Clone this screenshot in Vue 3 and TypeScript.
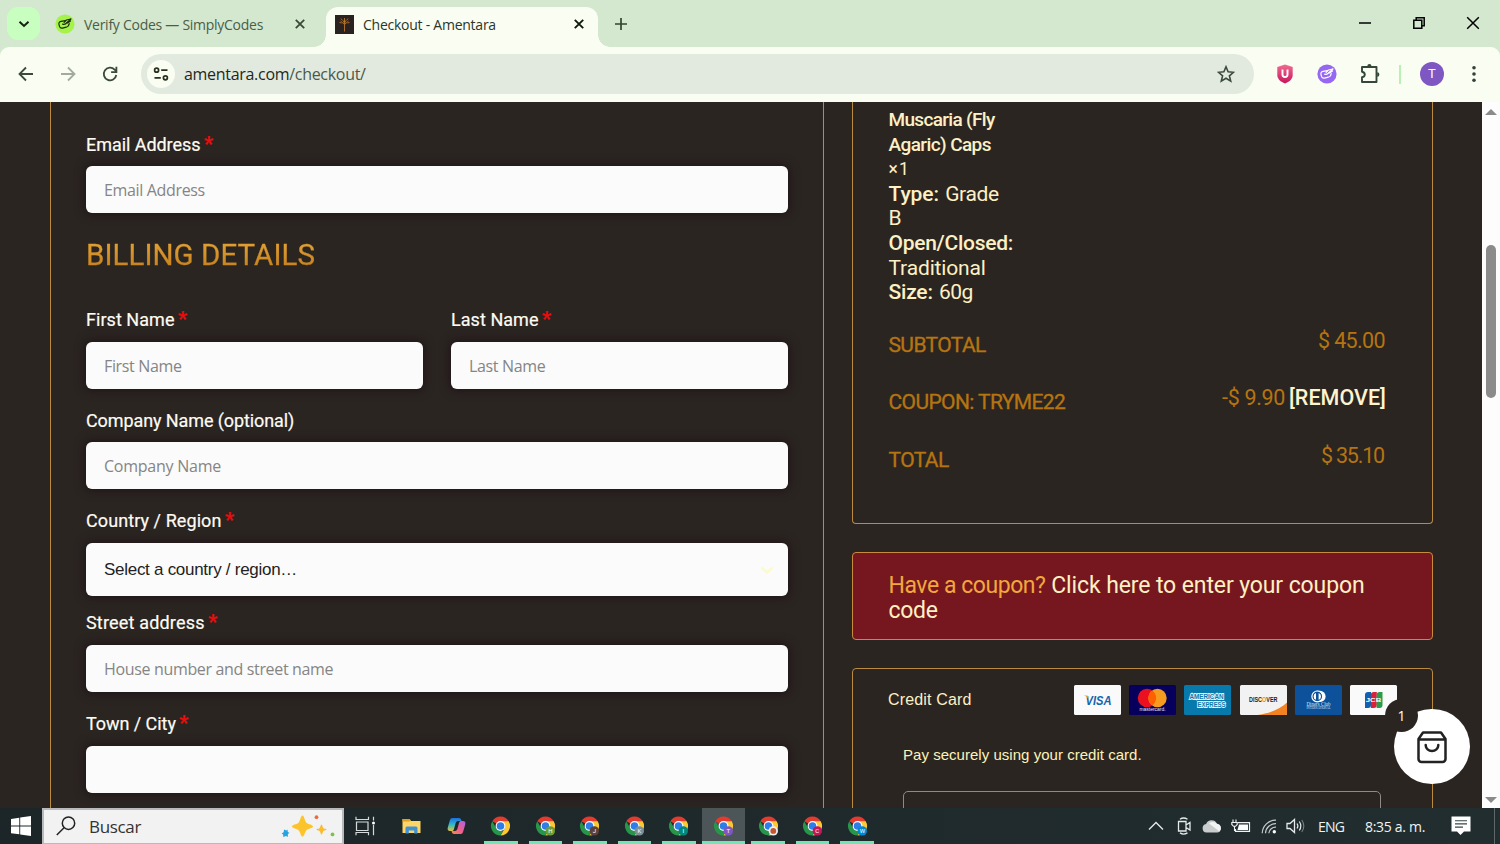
<script setup lang="ts">
interface TaskApp { id: string; badge?: string; color?: string; active?: boolean; logo?: boolean }

const apps: TaskApp[] = [
  { id: 'main' },
  { id: 'h', badge: 'H', color: '#689f38' },
  { id: 'j', badge: 'J', color: '#5d4037' },
  { id: 'k', badge: 'K', color: '#78909c' },
  { id: 'i', badge: 'I', color: '#00897b' },
  { id: 't', badge: 'T', color: '#7e57c2', active: true },
  { id: 'logo', logo: true, color: '#eceff1' },
  { id: 'c', badge: 'C', color: '#c2185b' },
  { id: 'w', badge: 'W', color: '#0288d1' },
]

const totals = [
  { key: 'subtotal', label: 'SUBTOTAL', value: '$ 45.00' },
  { key: 'coupon', label: 'COUPON: TRYME22', value: '-$ 9.90', removable: true },
  { key: 'total', label: 'TOTAL', value: '$ 35.10' },
]
</script>

<template>
  <div class="screen">
    <header class="tabs">
      <button class="tab-search" aria-label="Search tabs">
        <svg width="12" height="12" viewBox="0 0 12 12"><path d="M1.500 3.800L6 8l4.500-4.200" fill="none" stroke="#14210f" stroke-width="2" /></svg>
      </button>
      <div class="tab">
        <svg class="fav" width="20" height="20" viewBox="0 0 20 20">
          <circle cx="10" cy="10" r="9.600" fill="#a5f24b" />
          <g fill="none" stroke="#1a2b10" stroke-width="1.200" stroke-linecap="round" stroke-linejoin="round">
            <path d="M10.500 6.600L6 7.400c-1.800.4-2.400 1.600-2 3.200l.5 1.800c.5 1.500 1.500 2 3 1.700l3.700-.9c2-.6 2.800-1.800 3-3.700" />
            <path d="M7.600 10.200c1.900.5 3.400-.2 4.400-1.800l4-3.400-4.600 1-2.300 2.300M12.500 9l3-2" />
          </g>
        </svg>
        <span class="tab-title verify">Verify Codes — SimplyCodes</span>
        <svg class="close" width="12" height="12" viewBox="0 0 12 12"><path d="M1.800 1.800l8.400 8.400M10.200 1.800l-8.400 8.400" stroke="#3a4a36" stroke-width="1.800" /></svg>
      </div>
      <div class="tab active">
        <svg class="fav" width="19" height="19" viewBox="0 0 19 19">
          <rect width="19" height="19" fill="#2a2220" />
          <path d="M9.500 16.500V7M9.500 9.500L5.500 6M9.500 9.500l4-3.500M9.500 7V3M7.500 5.500L6 3.500M11.500 5.500L13 3.500M4.500 7.500l2 .5M14.500 7.500l-2 .5" stroke="#a96f2b" stroke-width="1" fill="none" />
          <circle cx="9.500" cy="6.500" r="1.300" fill="#b9792c" />
        </svg>
        <span class="tab-title check">Checkout - Amentara</span>
        <svg class="close" width="12" height="12" viewBox="0 0 12 12"><path d="M1.800 1.800l8.400 8.400M10.200 1.800l-8.400 8.400" stroke="#10180e" stroke-width="1.900" /></svg>
      </div>
      <svg class="plus" width="14" height="14" viewBox="0 0 14 14"><path d="M7 1v12M1 7h12" stroke="#33432f" stroke-width="1.700" /></svg>
      <div class="window-buttons">
        <svg width="14" height="14" viewBox="0 0 14 14"><path d="M1 7h12" stroke="#000" stroke-width="1.500" /></svg>
        <svg width="14" height="14" viewBox="0 0 14 14"><path d="M1.800 4.200h8v8h-8zM4.200 4V1.800h8v8H10" fill="none" stroke="#000" stroke-width="1.500" /></svg>
        <svg width="14" height="14" viewBox="0 0 14 14"><path d="M1.200 1.200l11.600 11.600M12.800 1.200L1.200 12.800" stroke="#000" stroke-width="1.500" /></svg>
      </div>
    </header>

    <div class="toolbar-wrap">
      <nav class="toolbar">
        <svg class="nav" width="16" height="16" viewBox="0 0 16 16"><path d="M15 8H2M8 1.500L1.500 8 8 14.500" fill="none" stroke="#3c4a3c" stroke-width="1.800" /></svg>
        <svg class="nav" width="16" height="16" viewBox="0 0 16 16"><path d="M1 8h13M8 1.500L14.500 8 8 14.500" fill="none" stroke="#a3aba0" stroke-width="1.800" /></svg>
        <svg class="nav" width="16" height="16" viewBox="0 0 16 16"><path d="M14.300 9A6.300 6.300 0 1 1 12.600 3.600L14.200 5.200M14.400 .8v5.300H9.100" fill="none" stroke="#3c4a3c" stroke-width="1.800" /></svg>
        <div class="omnibox">
          <span class="site-info">
            <svg width="16" height="16" viewBox="0 0 16 16"><g fill="none" stroke="#27331f" stroke-width="1.700"><circle cx="3.600" cy="4.200" r="2" /><path d="M8.200 4.200h6.300M1.500 11.800h6.300" /><circle cx="12.400" cy="11.800" r="2" /></g></svg>
          </span>
          <span class="url"><b>amentara.com</b>/checkout/</span>
          <svg class="star" width="18" height="18" viewBox="0 0 18 18"><path d="M9 1.800l2.100 5 5.400.5-4.100 3.500 1.300 5.300L9 13.300l-4.700 2.800 1.300-5.300L1.500 7.300l5.400-.5z" fill="none" stroke="#3c4a3c" stroke-width="1.600" /></svg>
        </div>
        <div class="extensions">
          <svg width="18" height="20" viewBox="0 0 18 20">
            <defs><linearGradient id="shield" x1="0" y1="0" x2="0" y2="1"><stop offset="0" stop-color="#f06b91" /><stop offset="1" stop-color="#c9155c" /></linearGradient></defs>
            <path d="M9 .5l7.700 2.500v8c0 4-3.400 7-7.700 8.500C4.700 18 1.300 15 1.300 11V3z" fill="url(#shield)" />
            <path d="M6.500 5.500v5a2.500 2.500 0 0 0 5 0v-5" fill="none" stroke="#fff" stroke-width="1.900" />
          </svg>
          <svg width="20" height="20" viewBox="0 0 20 20">
            <circle cx="10" cy="10" r="9.600" fill="#9567f2" />
            <g fill="none" stroke="#fff" stroke-width="1.200" stroke-linecap="round" stroke-linejoin="round"><path d="M10.500 6.600L6 7.400c-1.800.4-2.400 1.600-2 3.200l.5 1.800c.5 1.500 1.500 2 3 1.700l3.700-.9c2-.6 2.800-1.800 3-3.700" /><path d="M7.600 10.200c1.900.5 3.400-.2 4.400-1.800l4-3.400-4.600 1-2.300 2.300M12.500 9l3-2" /></g>
          </svg>
          <svg width="20" height="20" viewBox="0 0 20 20"><path d="M2 3h14.500v15H2v-4.700c1.800-.4 2.800-1.300 2.800-2.800S3.800 8.100 2 7.700z" fill="none" stroke="#35473a" stroke-width="1.900" stroke-linejoin="round" /><path d="M7.300 2.200a2.100 2.100 0 0 1 4.200 0zM17.200 8.300a2.200 2.200 0 0 1 0 4.400z" fill="#35473a" /></svg>
          <i class="divider"></i>
          <span class="avatar">T</span>
          <svg class="menu" width="6" height="18" viewBox="0 0 6 18" fill="#35403a"><circle cx="3" cy="2.800" r="1.800" /><circle cx="3" cy="9" r="1.800" /><circle cx="3" cy="15.200" r="1.800" /></svg>
        </div>
      </nav>
    </div>

    <main class="page">
      <section class="form panel">
        <label class="l-email">Email Address <em>*</em></label>
        <div class="field">Email Address</div>
        <h2>BILLING DETAILS</h2>
        <div class="names">
          <div><label>First Name <em>*</em></label><div class="field">First Name</div></div>
          <div><label>Last Name <em>*</em></label><div class="field">Last Name</div></div>
        </div>
        <label class="l-company">Company Name (optional)</label>
        <div class="field ph-company">Company Name</div>
        <label class="l-country">Country / Region <em>*</em></label>
        <div class="field select">
          <span>Select a country / region…</span>
          <svg width="14" height="9" viewBox="0 0 14 9"><path d="M1.500 1.500L7 6.500l5.500-5" fill="none" stroke="#fbfad0" stroke-width="2.500" /></svg>
        </div>
        <label class="l-street">Street address <em>*</em></label>
        <div class="field">House number and street name</div>
        <label class="l-town">Town / City <em>*</em></label>
        <div class="field"></div>
      </section>

      <aside class="side">
        <section class="order panel">
          <div class="product">
            <p class="name fly">Muscaria (Fly</p>
            <p class="name">Agaric) Caps</p>
            <p class="qty">× 1</p>
            <p><b class="k-type">Type:</b> <span class="v-grade">Grade</span></p>
            <p>B</p>
            <p><b class="k-open">Open/Closed:</b></p>
            <p class="v-trad">Traditional</p>
            <p><b class="k-size">Size:</b> <span class="v-size">60g</span></p>
          </div>
          <div v-for="t in totals" :key="t.key" class="total-row">
            <span class="t-label">{{ t.label }}</span>
            <span class="t-value" :class="t.key">{{ t.value }}<a v-if="t.removable">[REMOVE]</a></span>
          </div>
        </section>

        <section class="coupon panel">
          <p><span class="have">Have a coupon?</span> <span class="click">Click here to enter your coupon</span></p>
          <p class="code">code</p>
        </section>

        <section class="payment panel">
          <div class="pay-head">
            <span class="pay-title">Credit Card</span>
            <div class="cards">
              <svg viewBox="0 0 47 30"><rect width="47" height="30" rx="1.500" fill="#fafafa" /><text x="11.500" y="20" font-size="13.500" font-weight="700" font-style="italic" fill="#1465ae" textLength="26" lengthAdjust="spacingAndGlyphs">VISA</text><path d="M9.800 10.500h3.700l2 5c-1-2.300-3-4.200-5.700-5z" fill="#f2a32c" /></svg>
              <svg viewBox="0 0 47 30"><rect width="47" height="30" rx="1.500" fill="#06005c" /><circle cx="18" cy="13" r="9.200" fill="#eb1020" /><circle cx="28.500" cy="13" r="9.200" fill="#f79b1f" /><path d="M23.250 5.500a9.200 9.200 0 0 1 0 15 9.200 9.200 0 0 1 0-15z" fill="#ff5f00" /><text x="10.500" y="26.300" font-size="4.800" fill="#e8e6f4" textLength="26" lengthAdjust="spacingAndGlyphs">mastercard.</text></svg>
              <svg viewBox="0 0 47 30"><rect width="47" height="30" rx="1.500" fill="#0879ab" /><g font-size="7" font-weight="700" fill="#0879ab" stroke="#e6f4fa" stroke-width="1.800" paint-order="stroke"><text x="5.500" y="13.700" textLength="34" lengthAdjust="spacingAndGlyphs">AMERICAN</text><text x="13.500" y="21.600" textLength="28" lengthAdjust="spacingAndGlyphs">EXPRESS</text></g></svg>
              <svg viewBox="0 0 47 30"><rect width="47" height="30" rx="1.500" fill="#f3f2f2" /><path d="M47 17.500V28.500a1.500 1.500 0 0 1-1.500 1.500H17c13-1.500 23-6 30-12.500z" fill="#f58220" /><text x="9" y="17.300" font-size="6.300" font-weight="700" fill="#231f20" textLength="28.500" lengthAdjust="spacingAndGlyphs">DISC<tspan fill="#f58220">O</tspan>VER</text></svg>
              <svg viewBox="0 0 47 30"><rect width="47" height="30" rx="1.500" fill="#0c5199" /><path d="M21.500 5.800h3.500a5.600 5.600 0 0 1 0 11.200h-3.500z" fill="#fff" /><circle cx="22.300" cy="11.400" r="5.400" fill="#0c5199" stroke="#fff" stroke-width="1.200" /><path d="M21 8a3.600 3.600 0 0 0 0 6.800zM23.600 8a3.600 3.600 0 0 1 0 6.800z" fill="#fff" /><g class="serif" fill="#dbe7f4"><text x="11.500" y="21.300" font-size="6" textLength="24" lengthAdjust="spacingAndGlyphs">Diners Club</text><text x="11.500" y="24.300" font-size="3" textLength="24" lengthAdjust="spacingAndGlyphs">INTERNATIONAL</text></g></svg>
              <svg viewBox="0 0 47 30"><rect width="47" height="30" rx="1.500" fill="#fafafa" /><path d="M18 7h3v13a3 3 0 0 1-3 3h-3V10a3 3 0 0 1 3-3z" fill="#1061b0" /><path d="M23.800 7h3v13a3 3 0 0 1-3 3h-3V10a3 3 0 0 1 3-3z" fill="#d8213b" /><path d="M29.600 7h2.900v13a3 3 0 0 1-3 3h-2.900V10a3 3 0 0 1 3-3z" fill="#2a9b48" /><text x="15.800" y="17.300" font-size="6" font-weight="700" fill="#fff" textLength="15.500" lengthAdjust="spacingAndGlyphs">JCB</text></svg>
            </div>
          </div>
          <p class="pay-note">Pay securely using your credit card.</p>
          <div class="card-input"></div>
        </section>
      </aside>

      <div class="scrollbar">
        <i class="up"></i><i class="thumb"></i><i class="down"></i>
      </div>

      <div class="cart">
        <svg width="34" height="36" viewBox="0 0 34 36"><path d="M3.500 10L8 3.500h18l4.500 6.500V30a3 3 0 0 1-3 3h-21a3 3 0 0 1-3-3zM3.500 10.500h27" fill="none" stroke="#222" stroke-width="2.500" stroke-linejoin="round" /><path d="M10.700 16v.2a6.300 5.800 0 0 0 12.600 0V16" fill="none" stroke="#222" stroke-width="2.500" stroke-linecap="round" /></svg>
        <span>1</span>
      </div>
    </main>

    <footer class="taskbar">
      <div class="start">
        <svg width="20" height="20" viewBox="0 0 20 20" fill="#fff"><path d="M0 2.900l8.300-1.200v7.900H0zM9.200 1.600L20 0v9.600H9.200zM0 10.400h8.300v7.900L0 17.200zM9.200 10.400H20V20L9.200 18.400z" /></svg>
      </div>
      <div class="search">
        <svg width="20" height="20" viewBox="0 0 20 20"><circle cx="12.500" cy="7.200" r="6.200" fill="none" stroke="#222" stroke-width="1.500" /><path d="M8 11.800L.8 19" stroke="#222" stroke-width="1.500" /></svg>
        <span>Buscar</span>
        <svg class="sparkles" width="55" height="24" viewBox="0 0 55 24">
          <path d="M21.500 1.500c1.800 0 2.200 6 4.200 7.400s6.300 1.700 6.300 3.500-4.500 2-6.300 3.500-2.400 6.600-4.200 6.600-2.200-5.100-4.200-6.600-6.300-1.700-6.300-3.500 4.500-2.100 6.300-3.500 2.400-7.400 4.200-7.400z" fill="#fcc42c" />
          <path d="M40.500 10.500c.8 0 1 3 2 3.700s3 .5 3 1.300-2.200.7-3 1.400-1.200 3.600-2 3.600-1-2.900-2-3.600-3-.6-3-1.400 2.200-.6 3-1.300 1.200-3.700 2-3.700z" fill="#fbbb2b" />
          <path d="M3 15.500l2.200 1 1.300-1 .3 2.500 1.600.8-1.600 1.500.2 2.400-2.500-.7-2.100 1.200-.2-2.500-1.500-1.500 2-.9z" fill="#25a4e4" />
          <circle cx="35.500" cy="3.200" r="1.900" fill="#ee6a3c" /><circle cx="51.500" cy="20.400" r="1.900" fill="#82bf4c" />
        </svg>
      </div>
      <div class="cell c-view"><svg width="21" height="20" viewBox="0 0 21 20"><path d="M1 .8v2.700h12.500V.8M1.500 6h11.500v8.500H1.500zM1 19.200v-2.700h12.500v2.700M18.500.8v3.700M18.500 9v10.200" fill="none" stroke="#d5dadb" stroke-width="1.200" /><circle cx="18.500" cy="7" r="1.500" fill="#fff" /></svg></div>
      <div class="cell c-files"><svg width="19" height="16" viewBox="0 0 19 16"><path d="M.5 1h7L9 3h9.500v12H.5z" fill="#ffd567" /><path d="M.5 1h7l1 1.300-1 1.200h-7z" fill="#e3a01c" /><path d="M3.500 15.500V10a1.500 1.500 0 0 1 1.500-1.500h9A1.500 1.500 0 0 1 15.500 10v5.500h-3.300v-3H6.800v3z" fill="#3f93d2" /></svg></div>
      <div class="cell c-copilot">
        <svg width="19" height="18" viewBox="0 0 19 18">
          <defs>
            <linearGradient id="cpa" x1="0" y1="0" x2="0" y2="1"><stop offset="0" stop-color="#1f6ee0" /><stop offset=".5" stop-color="#2cb9c9" /><stop offset="1" stop-color="#e6c13b" /></linearGradient>
            <linearGradient id="cpb" x1="1" y1="0" x2="0" y2="1"><stop offset="0" stop-color="#a864e8" /><stop offset=".5" stop-color="#ec5d93" /><stop offset="1" stop-color="#f78c4a" /></linearGradient>
          </defs>
          <path d="M5.500 1H12c1.500 0 2 1 2.500 3H11C9.500 4 9 5 8.500 6.500L7 12c-.5 1.500-1 2-2.500 2H3c-2 0-2.800-1.500-2.200-3.500l2-7C3.300 1.800 4 1 5.500 1z" fill="url(#cpa)" />
          <path d="M13.500 17H7c-1.500 0-2-1-2.500-3H8c1.500 0 2-1 2.500-2.500L12 6c.5-1.500 1-2 2.500-2H16c2 0 2.800 1.500 2.200 3.500l-2 7c-.5 1.700-1.200 2.500-2.700 2.500z" fill="url(#cpb)" />
        </svg>
      </div>
      <div v-for="a in apps" :key="a.id" class="cell app" :class="{ current: a.active }">
        <svg width="22" height="22" viewBox="0 0 22 22">
          <path d="M10.500 11L2.270 6.250A9.500 9.500 0 0 1 18.730 6.250z" fill="#e33b2e" />
          <path d="M10.500 6.250h8.230A9.500 9.500 0 0 1 10.500 20.500L14.600 13.400z" fill="#fcc934" />
          <path d="M2.270 6.250L6.400 13.400 10.500 15.750h2.700L10.500 20.500A9.500 9.500 0 0 1 2.270 6.250z" fill="#27964a" />
          <circle cx="10.500" cy="11" r="4.900" fill="#fff" /><circle cx="10.500" cy="11" r="3.800" fill="#2f7de9" />
          <g v-if="a.badge || a.logo">
            <circle cx="15.300" cy="15.900" r="4.700" :fill="a.color" />
            <circle v-if="a.logo" cx="15.300" cy="15.900" r="2.900" fill="#c4572f" />
            <text v-else x="15.300" y="18" font-size="6" fill="#fff" text-anchor="middle">{{ a.badge }}</text>
          </g>
        </svg>
      </div>
      <div class="tray">
        <svg width="16" height="10" viewBox="0 0 16 10"><path d="M1 8.500l7-7 7 7" fill="none" stroke="#e6eaea" stroke-width="1.300" /></svg>
        <svg width="15" height="18" viewBox="0 0 15 18"><path d="M1.500 4.500h7.500v9.500H1.500zM9 8l4-2.500v7.500L9 10.500M3 2.300q3.500-2.600 7.500 0M3 15.900q3.500 2.400 7.500 0" fill="none" stroke="#e6eaea" stroke-width="1.300" /></svg>
        <svg width="20" height="14" viewBox="0 0 20 14"><path d="M4.500 13.500a4.300 4.300 0 0 1-.4-8.500A6 6 0 0 1 15 4.700a4.500 4.500 0 0 1 .5 8.800z" fill="#c9cccc" /><path d="M7 4.500l10.500 8a4.500 4.500 0 0 0-2.500-7.800 6 6 0 0 0-8-.2z" fill="#f1f2f2" /></svg>
        <svg width="20" height="15" viewBox="0 0 20 15"><path d="M6.500 3.600h12v8.800H4.500V10" fill="none" stroke="#f0f3f3" stroke-width="1.200" /><path d="M8 5.500h9v5.500H6.500z" fill="#fff" /><path d="M2 .5v3M5 .5v3M.8 3.500h5.400v2L4.500 7.300h-2L.8 5.500zM3.500 7v5" fill="#222d30" stroke="#f0f3f3" stroke-width="1.100" /></svg>
        <svg width="16" height="15" viewBox="0 0 16 15"><g fill="none" stroke="#c7cdce" stroke-width="1.200"><path d="M1.200 14.200A13.500 13.500 0 0 1 15 1.200M4.500 14.200A10 10 0 0 1 15 4.700M7.800 14.200A6.800 6.800 0 0 1 15 8.200" /></g><circle cx="13.300" cy="12.800" r="1.700" fill="#fff" /></svg>
        <svg width="19" height="16" viewBox="0 0 19 16"><path d="M1 5.500h3L8.500 1.500v13L4 10.500H1z" fill="none" stroke="#e6eaea" stroke-width="1.300" /><path d="M11 5.500q1.800 2.500 0 5M13.300 3.500q3 4.500 0 9" fill="none" stroke="#e6eaea" stroke-width="1.200" /><path d="M15.800 2q4 6 0 12" fill="none" stroke="#76807f" stroke-width="1.100" /></svg>
        <span class="lang">ENG</span>
        <span class="clock">8:35 a. m.</span>
        <svg class="note" width="20" height="20" viewBox="0 0 20 20"><path d="M.5.5h19v15H13l-3.500 3.500L6 15.500H.5z" fill="#fff" /><path d="M4 4.700h12M4 7.900h12M4 11.100h8" stroke="#3a4547" stroke-width="1.100" /></svg>
        <i class="peek"></i>
      </div>
    </footer>
  </div>
</template>

<style>
html, body { margin: 0; overflow: hidden; }
</style>

<style scoped>
* { box-sizing: border-box; }
svg { display: block; flex: none; }
p, h2 { margin: 0; }
.screen { width: 1500px; height: 844px; display: flex; flex-direction: column; overflow: hidden; font-family: "Open Sans", "Noto Sans", sans-serif; white-space: nowrap; background: #2b2522; }

/* tab strip */
.tabs { height: 47px; flex: none; display: flex; align-items: flex-start; padding: 7px 0 0 7px; background: #d3e8cf; }
.tab-search { width: 33px; height: 33px; border: 0; border-radius: 11px; padding: 0; background: #c8ffc0; display: grid; place-items: center; }
.tab { width: 286px; height: 34px; padding: 0 20px 0 15px; display: flex; align-items: center; color: #4b5d48; }
.tab-title { font-size: 14px; line-height: 20px; margin-top: 2px; }
.verify { margin-left: 9px; letter-spacing: -0.27px; }
.check { margin-left: 9px; letter-spacing: -0.25px; }
.close { margin-left: auto; }
.tab.active { position: relative; width: 272px; height: 40px; padding: 0 13px 6px 9px; border-radius: 12px 12px 0 0; background: #f9fdf2; color: #2b3629; }
.tab.active::before, .tab.active::after { content: ""; position: absolute; bottom: 0; width: 12px; height: 12px; }
.tab.active::before { left: -12px; background: radial-gradient(circle at 0 0, transparent 11.500px, #f9fdf2 12px); }
.tab.active::after { right: -12px; background: radial-gradient(circle at 100% 0, transparent 11.500px, #f9fdf2 12px); }
.plus { margin: 10px 0 0 16px; }
.window-buttons { margin: 9px 20px 0 auto; display: flex; gap: 40px; }

/* toolbar */
.toolbar-wrap { height: 55px; flex: none; background: #d3e8cf; }
.toolbar { height: 55px; border-radius: 9px 9px 0 0; background: #f9fdf2; display: flex; align-items: center; padding: 0 0 1px 18px; }
.nav { margin-right: 26px; }
.nav:nth-child(3) { margin-right: 23px; }
.omnibox { width: 1113px; height: 40px; border-radius: 20px; background: #e2eae0; display: flex; align-items: center; padding: 0 19px 0 6px; }
.site-info { width: 28px; height: 28px; border-radius: 50%; background: #f9fdf2; display: grid; place-items: center; }
.url { margin-left: 9px; font-size: 16px; letter-spacing: -0.3px; color: #4c584b; }
.url b { font-weight: 400; color: #1d281c; }
.star { margin-left: auto; }
.extensions { display: flex; align-items: center; margin-left: 22px; }
.extensions svg:nth-child(2), .extensions svg:nth-child(3) { margin-left: 23px; }
.divider { width: 2px; height: 19px; margin-left: 19px; background: #b9f0b4; }
.avatar { width: 24px; height: 24px; border-radius: 50%; margin: 0 27px 0 19px; background: #7e57c2; color: #fff; font: 13px/24px Roboto, sans-serif; text-align: center; }

/* page */
.page { position: relative; height: 706px; flex: none; overflow: hidden; display: flex; align-items: flex-start; background: #2b2522; padding-left: 50px; }
.panel { border: 1px solid #ba8a41; border-radius: 4px; }
.form { width: 774px; height: 760px; margin-right: 28px; padding: 31px 35px 0; border-top: 0; border-radius: 0; font-family: Roboto, sans-serif; flex: none; }
label { display: block; height: 24px; margin: 20px 0 9.800px; font-size: 18px; line-height: 24px; font-weight: 400; -webkit-text-stroke: 0.200px currentColor; color: #fdfbf3; letter-spacing: 0.05px; }
label em { font-style: normal; font-weight: 700; font-size: 20px; line-height: 10px; color: #e90d0d; letter-spacing: 0; margin-left: -1px; }
.l-email { margin: 0 0 8.700px; letter-spacing: -0.05px; }
.l-company { letter-spacing: -0.1px; }
.l-country { letter-spacing: 0.08px; }
.l-street { margin-top: 15.700px; letter-spacing: 0.18px; }
.l-town { letter-spacing: -0.05px; }
.field { height: 47px; border-radius: 6px; background: #fbfbfb; padding: 1px 18px 0; font: 16px/46px "Open Sans", sans-serif; letter-spacing: -0.34px; color: #858585; box-shadow: 0 0 10px 2px rgba(20, 8, 14, 0.5); }
.ph-company { letter-spacing: -0.24px; }
h2 { margin: 22px 0 35px; height: 38px; font-size: 29.500px; line-height: 40px; font-weight: 400; letter-spacing: 0.05px; width: 300px; background: linear-gradient(#e2a033 20%, #c88420 80%); -webkit-background-clip: text; background-clip: text; -webkit-text-stroke: 0.300px transparent; color: transparent; }
.names { display: grid; grid-template-columns: 337px 337px; justify-content: space-between; }
.names label { margin: 0 0 10px; }
.select { height: 52.500px; display: flex; align-items: center; justify-content: space-between; padding: 1px 14px 0 18px; font: 17px "Liberation Sans", sans-serif; letter-spacing: -0.28px; color: #222; }

/* order summary */
.side { width: 581px; flex: none; color: #fdf0c4; font-family: Roboto, sans-serif; }
.order { height: 422px; border-top: 0; border-radius: 0 0 4px 4px; padding: 6px 47px 0 35.500px; }
.product { font-size: 21px; height: 211px; }
.product p { height: 24.600px; line-height: 25.400px; }
.product b { font-weight: 500; }
.product .name { font-size: 19px; line-height: 23.600px; font-weight: 500; letter-spacing: -0.6px; }
.product .fly { letter-spacing: -0.67px; }
.product .qty { font-size: 17.500px; letter-spacing: -0.9px; word-spacing: -1.500px; }
.k-type { letter-spacing: -0.1px; }
.v-grade { letter-spacing: -0.35px; margin-left: 1px; }
.k-open { letter-spacing: -0.28px; }
.v-trad { letter-spacing: -0.15px; }
.k-size { letter-spacing: -0.2px; }
.v-size { letter-spacing: -0.6px; margin-left: 1px; }
.total-row { height: 57.500px; display: flex; justify-content: space-between; align-items: flex-start; color: #b57410; font-size: 21.500px; line-height: 26px; }
.t-label { margin-top: 12.700px; font-size: 21px; font-weight: 400; -webkit-text-stroke: 0.350px #b57410; letter-spacing: -0.6px; }
.t-value { margin-top: 8.500px; letter-spacing: -0.63px; }
.t-value.coupon { letter-spacing: -0.33px; margin-right: -1px; }
.t-value.total { letter-spacing: -1.2px; margin-right: 1px; }
.t-value a { margin-left: 4px; font-weight: 500; letter-spacing: 0.03px; color: #fdf4cf; }

.coupon.panel { height: 88px; margin-top: 28px; padding: 20px 35.500px 0; border-color: #c98a3c; background: #76171f; font-size: 23px; line-height: 25px; }
.have { color: #f3a73c; letter-spacing: -0.45px; }
.click { letter-spacing: -0.11px; }
.code { letter-spacing: -0.33px; }

.payment { height: 200px; margin-top: 28px; padding: 16px 35px 0; font-family: "Liberation Sans", sans-serif; }
.pay-head { display: flex; justify-content: space-between; height: 30px; }
.pay-title { font-size: 16px; line-height: 29px; letter-spacing: 0.15px; }
.cards { display: flex; gap: 8.200px; }
.cards svg { width: 47px; height: 30px; overflow: visible; font-family: "Liberation Sans", sans-serif; }
.cards .serif { font-family: "Liberation Serif", serif; }
.pay-note { margin: 30px 0 0 15px; font-size: 15px; line-height: 20px; letter-spacing: 0.03px; color: #fbf3b8; }
.card-input { width: 478px; margin: 26px 0 0 15px; height: 60px; border: 1px solid #8f8a87; border-radius: 5px; }

.scrollbar { width: 18px; height: 706px; margin-left: auto; background: #fdfdfd; display: flex; flex-direction: column; align-items: center; }
.scrollbar i { display: block; flex: none; }
.up { border: 6px solid transparent; border-top: 0; border-bottom: 6px solid #8b8b8b; margin-top: 7px; }
.thumb { width: 10px; height: 153px; margin-top: 130px; border-radius: 5px; background: #8b8b8b; }
.down { border: 6px solid transparent; border-bottom: 0; border-top: 6px solid #8b8b8b; margin-top: auto; margin-bottom: 5px; }

.cart { position: absolute; left: 1394px; top: 606.500px; width: 75.500px; height: 75px; border-radius: 50%; background: #fff; display: grid; place-items: center; }
.cart svg { margin-top: 2px; }
.cart span { position: absolute; left: -9px; top: -10px; width: 33px; height: 33px; border-radius: 50%; background: #2b2522; color: #fff; font-size: 14px; line-height: 33px; text-align: center; }

/* taskbar */
.taskbar { height: 36px; flex: none; display: flex; background: linear-gradient(90deg, #1c2629, #222d30); }
.start { width: 42px; display: grid; place-items: center; }
.search { width: 302px; height: 36px; border: 2px solid #b9babb; border-bottom-width: 1px; background: #f2f2f2; display: flex; align-items: center; padding: 0 6px 2px 12px; color: #333; }
.search span { font-size: 17px; letter-spacing: -0.34px; margin: 2px 0 0 13px; }
.sparkles { margin-left: auto; }
.cell { display: grid; place-items: center; flex: none; }
.c-view { width: 43px; }
.c-files { width: 49px; }
.c-copilot { width: 42.500px; }
.c-copilot svg { margin-right: 2px; }
.app { width: 44.560px; height: 36px; position: relative; font-family: Roboto, sans-serif; }
.app svg { margin-left: 1px; }
.app::after { content: ""; position: absolute; left: 5.500px; right: 5.500px; bottom: 0; height: 3px; background: #6ee7b4; }
.app.current { background: linear-gradient(#4c5658, #4c5658) center / 43px 36px no-repeat; }
.app.current::after { left: 1px; right: 1px; }
.tray { margin-left: auto; display: flex; align-items: center; color: #f0f3f3; font-size: 14px; }
.tray svg + svg { margin-left: 12px; }
.tray svg:nth-child(2) { margin-left: 13px; }
.tray svg:nth-child(3) { margin-left: 10px; }
.tray svg:nth-child(4) { margin-left: 9px; }
.tray svg:nth-child(5) { margin-left: 10px; }
.tray svg:nth-child(6) { margin-left: 9px; }
.lang { margin-left: 13px; letter-spacing: -0.83px; }
.clock { margin-left: 21px; letter-spacing: -0.31px; }
.note { margin-left: 26px; }
.peek { width: 1px; height: 36px; margin: 0 5px 0 23px; background: #5d686a; }
</style>
